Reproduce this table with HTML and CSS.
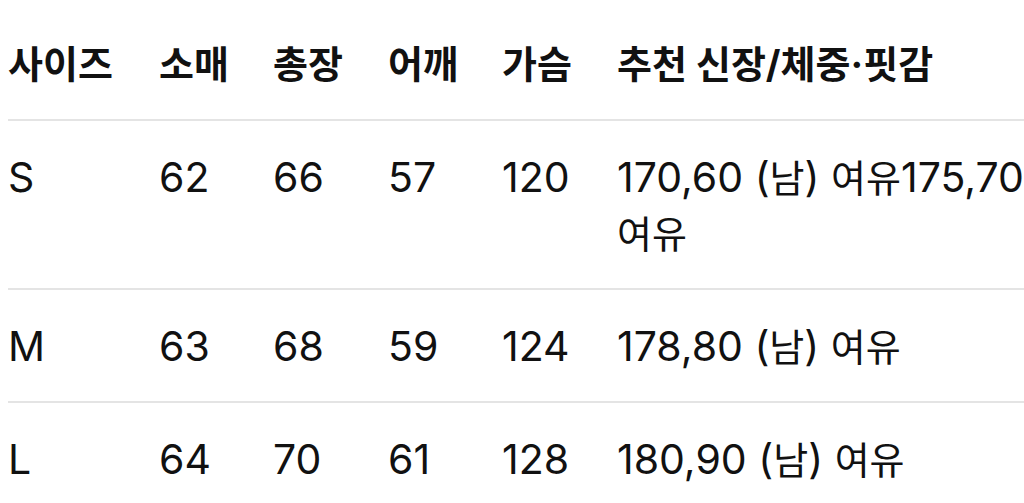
FILE: index.html
```html
<!DOCTYPE html>
<html lang="ko">
<head>
<meta charset="utf-8">
<link rel="stylesheet" href="styles.css">
</head>
<body>
<div class="size-table">
  <div class="row head">
    <div class="cell">사이즈</div>
    <div class="cell">소매</div>
    <div class="cell">총장</div>
    <div class="cell">어깨</div>
    <div class="cell">가슴</div>
    <div class="cell">추천 신장/체중·핏감</div>
  </div>
  <div class="row">
    <div class="cell">S</div>
    <div class="cell">62</div>
    <div class="cell">66</div>
    <div class="cell">57</div>
    <div class="cell">120</div>
    <div class="cell">170,60 (<span class="ko">남</span>) <span class="ko">여유</span>175,70 <span class="ko">여유</span></div>
  </div>
  <div class="row">
    <div class="cell">M</div>
    <div class="cell">63</div>
    <div class="cell">68</div>
    <div class="cell">59</div>
    <div class="cell">124</div>
    <div class="cell">178,80 (<span class="ko">남</span>) <span class="ko">여유</span></div>
  </div>
  <div class="row last">
    <div class="cell">L</div>
    <div class="cell">64</div>
    <div class="cell">70</div>
    <div class="cell">61</div>
    <div class="cell">128</div>
    <div class="cell">180,90 (<span class="ko">남</span>) <span class="ko">여유</span></div>
  </div>
</div>
</body>
</html>
```

FILE: styles.css
```css
html, body {
  background: #ffffff;
}
body {
  margin: 8px 0 0 8px;
  font-family: Inter, "Noto Sans CJK KR", sans-serif;
  color: #111111;
  font-size: 41px;
  overflow: hidden;
}
.size-table {
  display: flex;
  flex-direction: column;
}
.row {
  display: grid;
  grid-template-columns: 151px 114px 115px 114px 115px 1fr;
  border-bottom: 2px solid #e4e4e4;
}
.row.last {
  border-bottom: none;
}
.cell {
  padding: 28px 0 27px 0;
  line-height: 56px;
}
.head .cell {
  font-weight: 700;
  font-size: 38px;
}
.ko {
  font-size: 38px;
  line-height: 1;
}
```
